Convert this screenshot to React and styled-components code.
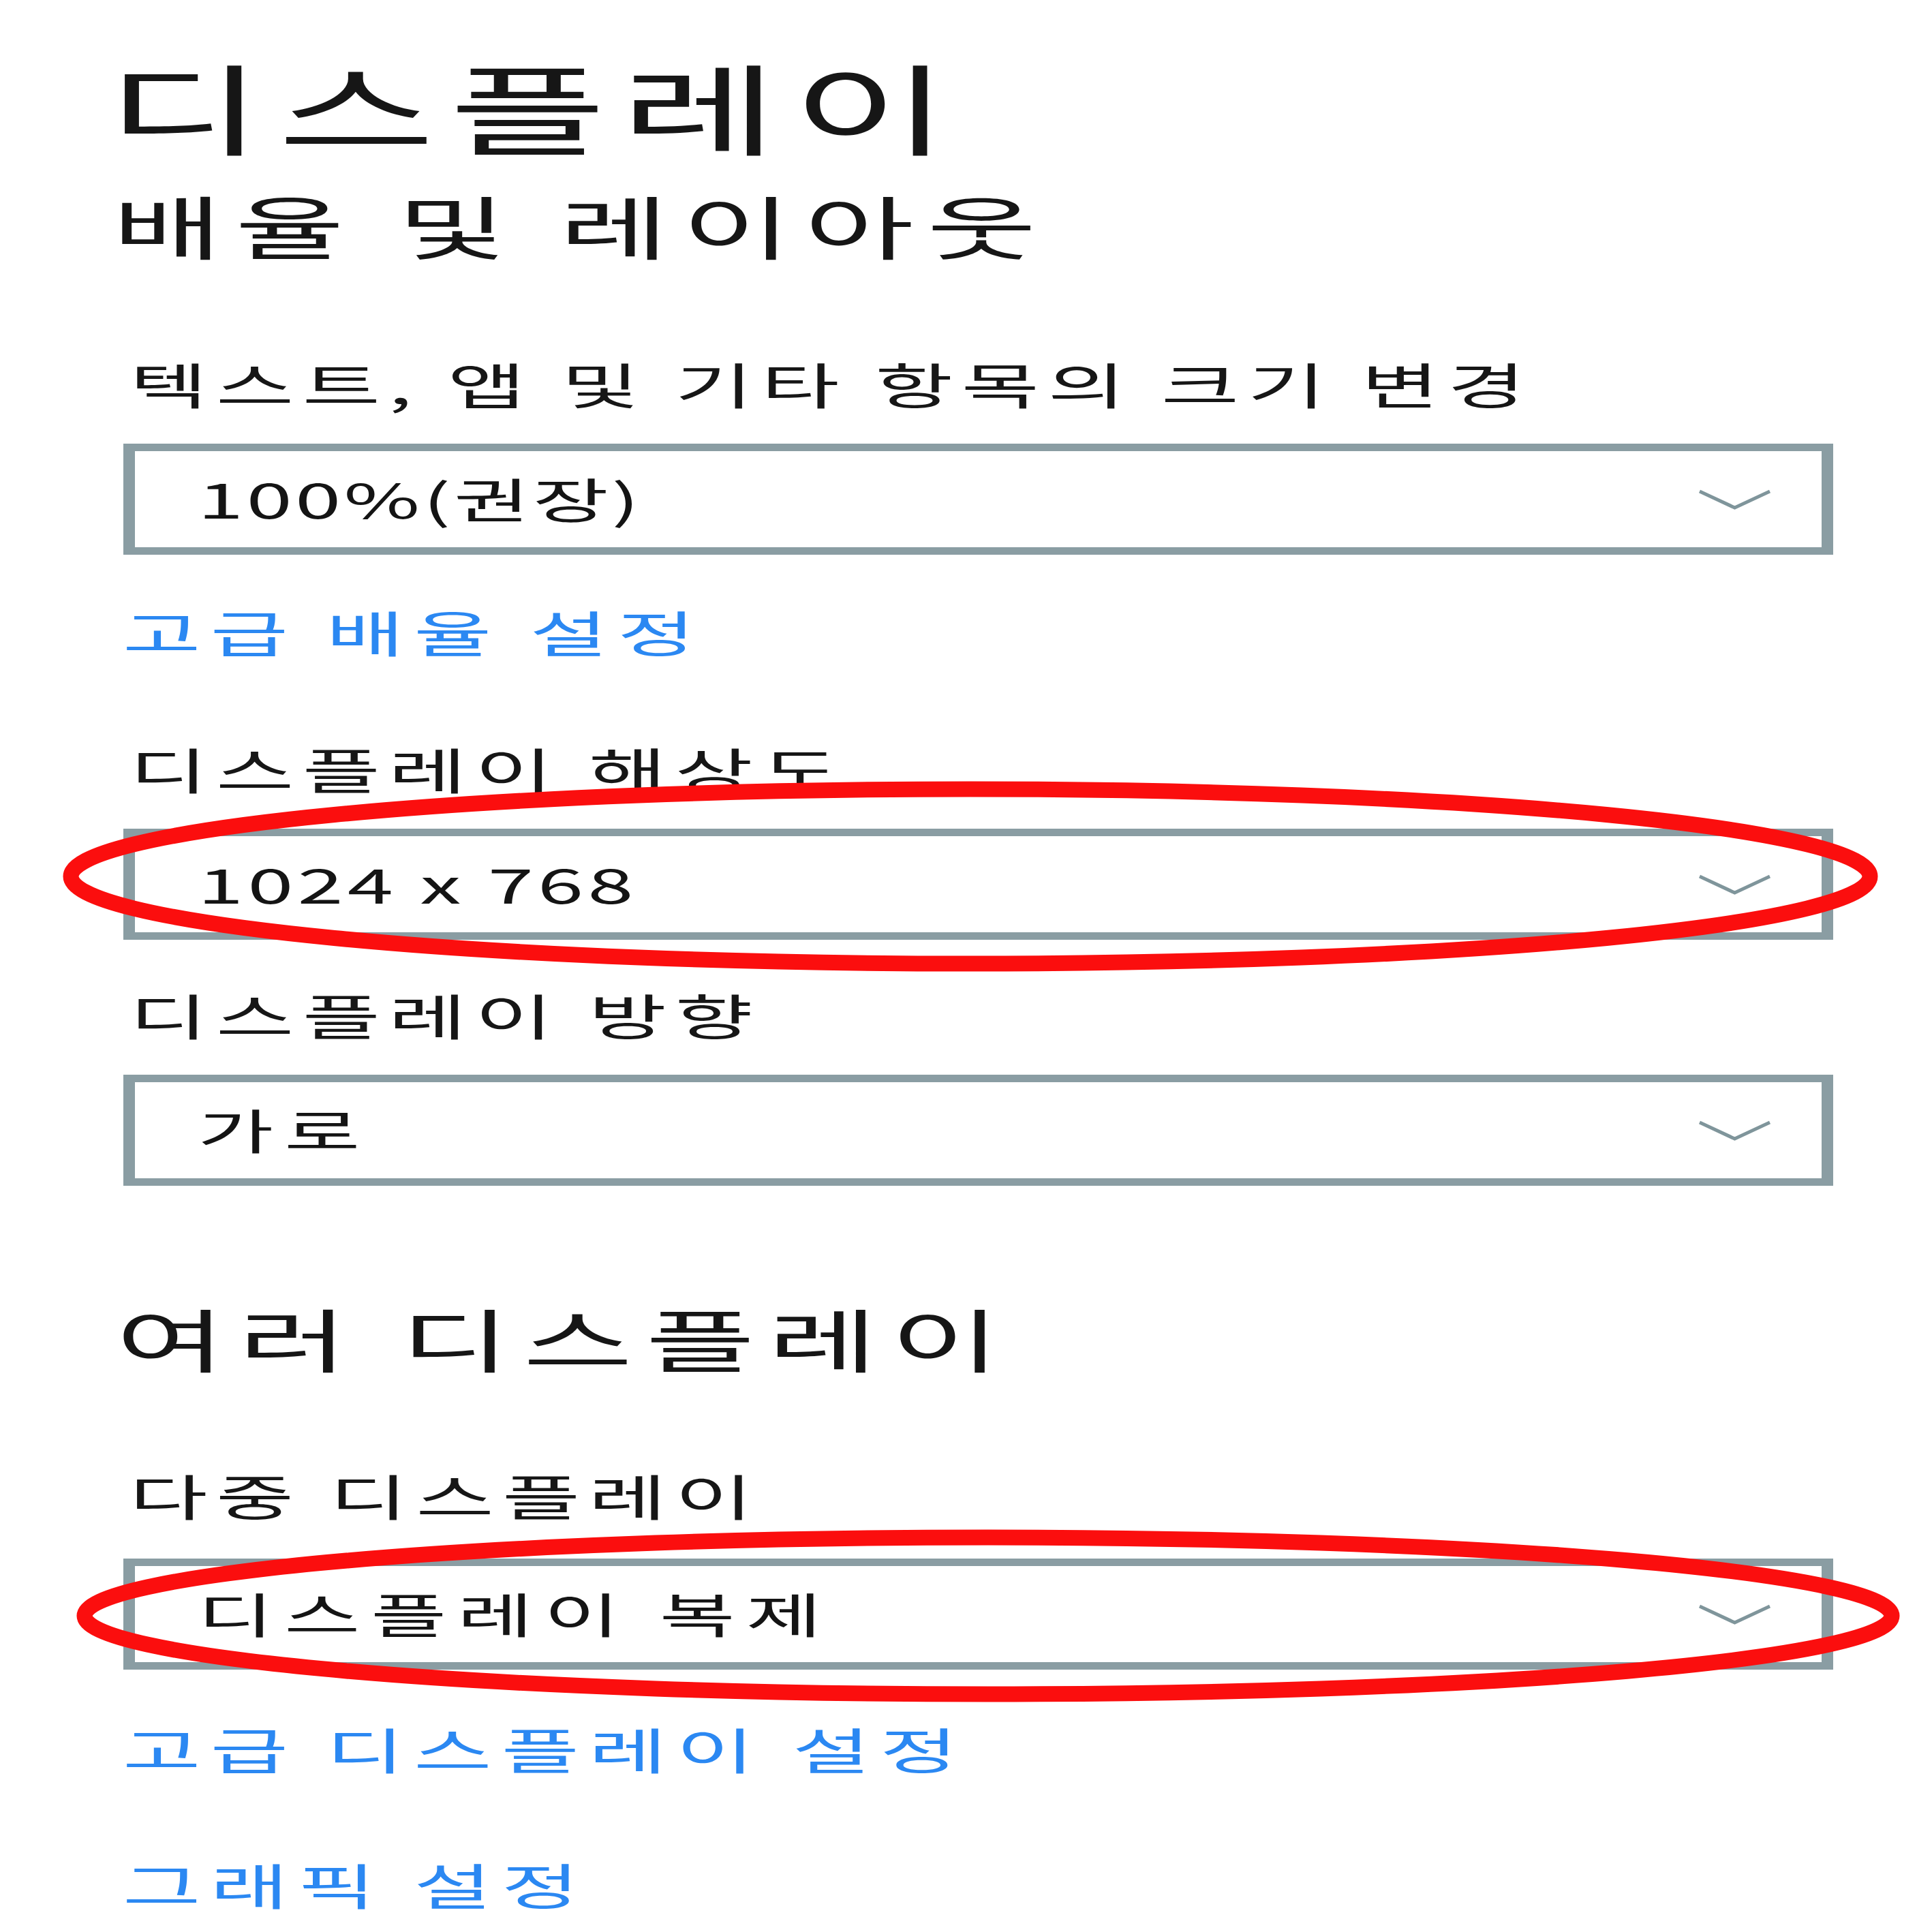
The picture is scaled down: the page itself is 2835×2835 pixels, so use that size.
import React from "react";
import styled, { createGlobalStyle } from "styled-components";

const GlobalStyle = createGlobalStyle`
  html, body { margin: 0; padding: 0; background: #ffffff; }
  body { font-family: "Noto Sans CJK KR", "Noto Sans", sans-serif; }
`;

const SX = 1.73;

const Page = styled.div`
  position: relative;
  width: 2835px;
  height: 2835px;
  overflow: hidden;
  box-sizing: border-box;
  padding: 82px 0 0 170px;
  display: flex;
  flex-direction: column;
  align-items: flex-start;
  background: #fff;
`;

const Stretch = styled.span`
  display: inline-block;
  white-space: pre;
  transform: scaleX(${SX});
  transform-origin: 0 50%;
  letter-spacing: ${(p) => p.$ls || 0}px;
`;

const Title = styled.div`
  font-size: 145px;
  line-height: 145px;
  color: #161616;
  margin-left: -14px;
  margin-top: ${(p) => p.$top || 0}px;
`;

const SectionTitle = styled.div`
  font-size: 101px;
  line-height: 101px;
  color: #161616;
  margin-left: ${(p) => p.$left || 0}px;
  margin-top: ${(p) => p.$top || 0}px;
`;

const Field = styled.div`
  display: flex;
  flex-direction: column;
  gap: ${(p) => p.$gap || 53}px;
  margin-top: ${(p) => p.$top || 0}px;
`;

const Label = styled.div`
  font-size: 72px;
  line-height: 72px;
  color: #161616;
  margin-left: 20px;
`;

const Select = styled.div`
  box-sizing: border-box;
  width: 2509px;
  height: 163px;
  margin-left: 11px;
  border-style: solid;
  border-color: #8a9da3;
  border-width: 11px 17px;
  display: flex;
  align-items: center;
  justify-content: space-between;
  padding: 0 74px 0 92px;
  background: #fff;
`;

const Value = styled.div`
  font-size: 70px;
  line-height: 70px;
  color: #141414;
  position: relative;
  top: -2px;
`;

const Link = styled.div`
  font-size: 72px;
  line-height: 72px;
  color: #2b88f2;
  margin-left: 10px;
  margin-top: ${(p) => p.$top || 0}px;
`;

const Mark = styled.svg`
  position: absolute;
  pointer-events: none;
  overflow: visible;
`;

const Chevron = () => (
  <svg width="107" height="30" viewBox="0 0 107 30">
    <polyline
      points="2,3 53.5,27 105,3"
      fill="none"
      stroke="#7f959b"
      strokeWidth="5"
    />
  </svg>
);

const Dropdown = ({ children, ls = 9 }) => (
  <Select>
    <Value>
      <Stretch $ls={ls}>{children}</Stretch>
    </Value>
    <Chevron />
  </Select>
);

const Ellipse = ({ x, y, w, h }) => (
  <Mark
    width={w}
    height={h}
    viewBox={`0 0 ${w} ${h}`}
    style={{ left: x, top: y }}
  >
    <ellipse
      cx={w / 2}
      cy={h / 2}
      rx={w / 2 - 12}
      ry={h / 2 - 12}
      fill="none"
      stroke="#fb0e0e"
      strokeWidth="23"
    />
  </Mark>
);

export default function App() {
  return (
    <>
      <GlobalStyle />
      <Page>
        <Title>
          <Stretch $ls={12}>디스플레이</Stretch>
        </Title>
        <SectionTitle $top={52} $left={-5}>
          <Stretch $ls={11}>배율 및 레이아웃</Stretch>
        </SectionTitle>

        <Field $top={146}>
          <Label>
            <Stretch $ls={7}>텍스트, 앱 및 기타 항목의 크기 변경</Stretch>
          </Label>
          <Dropdown ls={2.5}>100%(권장)</Dropdown>
        </Field>
        <Link $top={76}>
          <Stretch $ls={8}>고급 배율 설정</Stretch>
        </Link>

        <Field $top={129}>
          <Label>
            <Stretch $ls={7}>디스플레이 해상도</Stretch>
          </Label>
          <Dropdown ls={3.5}>1024 x 768</Dropdown>
        </Field>

        <Field $top={73}>
          <Label>
            <Stretch $ls={7}>디스플레이 방향</Stretch>
          </Label>
          <Dropdown>가로</Dropdown>
        </Field>

        <SectionTitle $top={172}>
          <Stretch $ls={11}>여러 디스플레이</Stretch>
        </SectionTitle>

        <Field $top={144} $gap={58}>
          <Label>
            <Stretch $ls={7}>다중 디스플레이</Stretch>
          </Label>
          <Dropdown>디스플레이 복제</Dropdown>
        </Field>
        <Link $top={79}>
          <Stretch $ls={8}>고급 디스플레이 설정</Stretch>
        </Link>
        <Link $top={127}>
          <Stretch $ls={8}>그래픽 설정</Stretch>
        </Link>

        <Ellipse x={92} y={1146} w={2664} h={280} />
        <Ellipse x={112} y={2244} w={2676} h={254} />
      </Page>
    </>
  );
}
